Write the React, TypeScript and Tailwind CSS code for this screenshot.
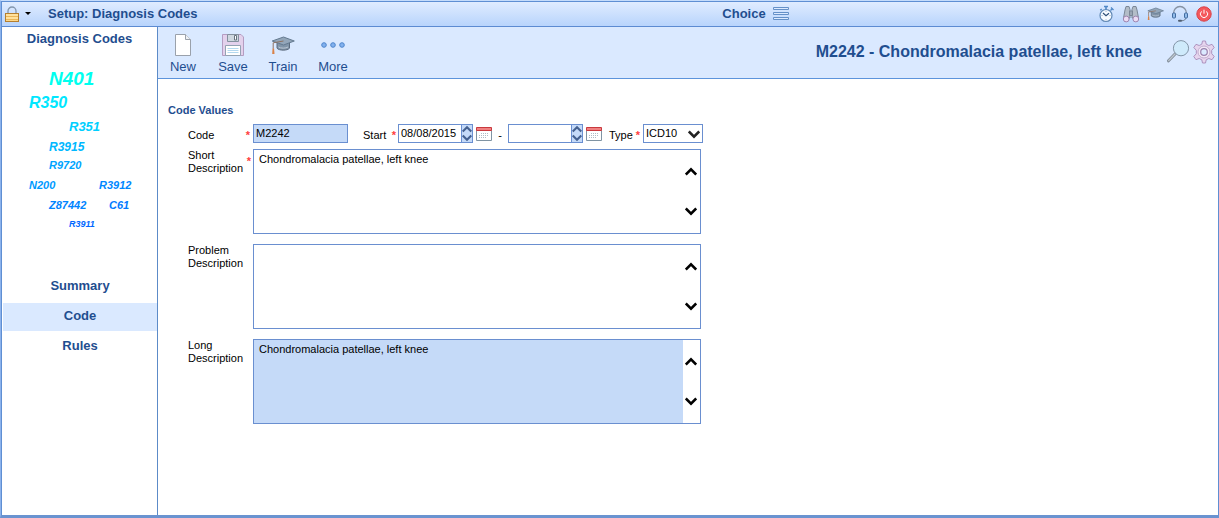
import { useState } from "react";
import type { ReactNode } from "react";

interface CloudCode {
  code: string;
  className: string;
}

interface CloudRow {
  className: string;
  codes: CloudCode[];
}

const CLOUD: CloudRow[] = [
  { className: "h-6 pl-[47px] text-[19px]", codes: [{ code: "N401", className: "text-[#00ffef]" }] },
  { className: "h-6 pl-[27px] text-base", codes: [{ code: "R350", className: "text-[#00e7ff]" }] },
  { className: "h-6 pl-[67px] text-[13px]", codes: [{ code: "R351", className: "text-[#00cfff]" }] },
  { className: "h-4 pl-[47px] text-xs", codes: [{ code: "R3915", className: "text-[#00b8ff]" }] },
  { className: "h-5 pl-[47px] text-[11px]", codes: [{ code: "R9720", className: "text-[#00a4ff]" }] },
  {
    className: "h-5 pl-[27px] text-[11px]",
    codes: [
      { code: "N200", className: "w-[70px] text-[#009aff]" },
      { code: "R3912", className: "text-[#0088ff]" },
    ],
  },
  {
    className: "h-5 pl-[47px] text-[11px]",
    codes: [
      { code: "Z87442", className: "w-[60px] text-[#0084ff]" },
      { code: "C61", className: "text-[#007aff]" },
    ],
  },
  { className: "h-5 pl-[67px] text-[9px]", codes: [{ code: "R3911", className: "text-[#0068ff]" }] },
];

const SECTIONS = ["Summary", "Code", "Rules"];

function LockIcon() {
  return (
    <svg width="16" height="16" viewBox="0 0 16 16" fill="none">
      <path d="M4 7V5a4 4 0 0 1 8 0v2" stroke="#8497ad" strokeWidth="1.3" />
      <rect x="1.5" y="7.5" width="13" height="8" fill="#ffd98a" stroke="#b57f2f" />
      <path d="M2 10.5h12M2 13.5h12" stroke="#eab659" />
      <path d="M2 9h12M2 12h12" stroke="#fff0c0" strokeWidth=".7" />
    </svg>
  );
}

function StopwatchIcon() {
  return (
    <svg width="16" height="18" viewBox="0 0 16 18" fill="none">
      <circle cx="7" cy="10.500" r="6" fill="#f7fbff" stroke="#6289b5" strokeWidth="1.200" />
      <path d="M5 1.500h4M7 1.500v3" stroke="#4f87c6" strokeWidth="1.600" />
      <path d="M11.500 5.500l2-2M12 2.500l2.500 2.500M1.200 5.200l1.500-1.200" stroke="#4f87c6" strokeWidth="1.300" />
      <path d="M4 8l3 2.700L10 8.200" stroke="#2e4f78" strokeWidth="1.200" />
      <path d="M7 5.800v1M7 14.300v1M2.500 10.500h1M10.500 10.500h1" stroke="#8fa7c2" />
    </svg>
  );
}

function BinocularsIcon() {
  return (
    <svg width="18" height="18" viewBox="0 0 18 18" fill="none">
      <path d="M4 1.500h3l1 3v8.500H1.500L3 5zM14 1.500h-3l-1 3v8.500h6.500L15 5z" fill="#b3bdc8" stroke="#7b8797" />
      <path d="M7.500 6h3v4.500h-3z" fill="#9aa6b5" stroke="#7b8797" />
      <circle cx="4.200" cy="14" r="2.900" fill="#eadcf3" stroke="#9d84b0" />
      <circle cx="13.800" cy="14" r="2.900" fill="#eadcf3" stroke="#9d84b0" />
    </svg>
  );
}

function CapIcon({ width, height }: { width: number; height: number }) {
  return (
    <svg width={width} height={height} viewBox="0 0 24 19" fill="none">
      <path d="M6 6v6.200c2 2.600 10.500 2.600 12.500 0V6z" fill="#8094a8" stroke="#5c6b7d" />
      <path d="M7.500 11c2 1.500 7.500 1.500 9.500 0" stroke="#bcc7d3" />
      <path d="M12.500 1l10.800 4-10.800 4L1.200 5z" fill="#93a6b9" stroke="#647a90" />
      <path d="M12.500 5L2.200 6.800v6" stroke="#8d7263" />
      <path d="M1.500 12.500h1.600l.4 5.500H1.200z" fill="#d98248" />
    </svg>
  );
}

function HeadsetIcon() {
  return (
    <svg width="18" height="18" viewBox="0 0 18 18" fill="none">
      <path d="M2.500 8.500a6.500 7 0 0 1 13 0" stroke="#8692a3" strokeWidth="1.300" />
      <path d="M15 12.500c0 2-2 3.300-4.500 3.300" stroke="#6e7b8c" />
      <rect x="1.500" y="8" width="3" height="5" rx="1" fill="#91bbea" stroke="#416b9f" />
      <rect x="13.500" y="8" width="3" height="5" rx="1" fill="#91bbea" stroke="#416b9f" />
      <rect x="7" y="14.800" width="4" height="2" rx="1" fill="#4f5e70" />
    </svg>
  );
}

function PowerIcon() {
  return (
    <svg width="16" height="16" viewBox="0 0 16 16" fill="none">
      <circle cx="8" cy="8" r="7.200" fill="#f4585c" stroke="#d94046" />
      <path d="M5.500 5.400a3.600 3.600 0 1 0 5 0M8 3.700v4" stroke="#fff" />
    </svg>
  );
}

function PageIcon() {
  return (
    <svg width="18" height="22" viewBox="0 0 18 22" fill="none">
      <path d="M1.500.5h10l5 5v16h-15z" fill="#fff" stroke="#9aa1ab" />
      <path d="M11.500.5v5h5" fill="#eef1f5" stroke="#9aa1ab" />
    </svg>
  );
}

function DiskIcon() {
  return (
    <svg width="22" height="22" viewBox="0 0 22 22" fill="none">
      <path d="M.5.5h18.500l2.500 2.500v18.500H.5z" fill="#e3d1ec" stroke="#b49dc2" />
      <path d="M5.500.5h11v7h-11z" fill="#cfd8e0" stroke="#84919f" />
      <path d="M12.500 1.500h2v4.500h-2z" fill="#fff" stroke="#66727f" />
      <path d="M3.500 11.500h15v10h-15z" fill="#fff" stroke="#93a3b3" />
      <path d="M5.500 14.500h11M5.500 16.500h11M5.500 18.500h11" stroke="#b3d8ef" />
    </svg>
  );
}

function DotsIcon() {
  return (
    <svg width="24" height="8" viewBox="0 0 24 8" fill="#82b1ee" stroke="#4d85cc">
      <circle cx="3" cy="4" r="2.300" />
      <circle cx="12" cy="4" r="2.300" />
      <circle cx="21" cy="4" r="2.300" />
    </svg>
  );
}

function MagnifierIcon() {
  return (
    <svg width="24" height="24" viewBox="0 0 24 24" fill="none">
      <path d="M9.500 13.500L2.500 20.800" stroke="#818c98" strokeWidth="3" strokeLinecap="round" />
      <path d="M9 14L2.700 20.500" stroke="#bec7cf" strokeWidth="1.300" strokeLinecap="round" />
      <circle cx="15" cy="8.200" r="7.600" fill="#cfeafb" stroke="#8496a8" />
    </svg>
  );
}

function GearIcon() {
  return (
    <svg width="24" height="24" viewBox="0 0 24 24" fill="none">
      <path
        d="M10.500 1h3l.7 3.200 2.600 1.300L20 4.300l2.200 3.200-2.500 2.800v3.400l2.500 2.800-2.200 3.200-3.200-1.200-2.600 1.300-.7 3.200h-3l-.7-3.200-2.600-1.300L4 19.700l-2.200-3.200 2.500-2.800v-3.400L1.800 7.500 4 4.300l3.200 1.200 2.600-1.300z"
        fill="#e6d5ee"
        stroke="#ad93bf"
        strokeLinejoin="round"
      />
      <circle cx="12" cy="12" r="6" fill="#f2e8f6" stroke="#c3aed0" />
      <circle cx="12" cy="12" r="3.300" fill="#dbeaff" stroke="#9a82ae" strokeWidth="1.200" />
    </svg>
  );
}

function CalendarIcon() {
  return (
    <svg width="16" height="14" viewBox="0 0 16 14" fill="none">
      <path d="M.5 3.500h15v10H.5z" fill="#fff" stroke="#8094a3" />
      <path d="M.5.5h15v3H.5z" fill="#f08080" stroke="#c8393e" />
      <path d="M5 6.500h7M3 8.500h9M3 10.500h7" stroke="#aebcc6" strokeDasharray="1 1" />
    </svg>
  );
}

function Chevron({ up, className }: { up?: boolean; className?: string }) {
  return (
    <svg className={className} width="12" height="9" viewBox="0 0 12 9" fill="none" stroke="currentColor" strokeWidth="2.600">
      <path d={up ? "M.8 7.500L6 2.300l5.200 5.200" : "M.8 1.500L6 6.700l5.200-5.200"} />
    </svg>
  );
}

function ToolButton({ label, children }: { label: string; children: ReactNode }) {
  return (
    <button className="w-[50px] flex flex-col items-center text-[13px] leading-4">
      <span className="h-6 flex items-center justify-center">{children}</span>
      <span className="pt-[2px]">{label}</span>
    </button>
  );
}

function Required() {
  return <span className="font-bold text-[#ff4040]" aria-hidden="true">*</span>;
}

function DateField({ id, label, value }: { id: string; label: string; value: string }) {
  const [date, setDate] = useState(value);

  return (
    <div className="flex items-center gap-[3px]">
      <div className="flex w-[75px] h-[19px] border border-[#6a8fd0]">
        <input
          id={id}
          aria-label={label}
          value={date}
          onChange={e => setDate(e.target.value)}
          className="flex-1 min-w-0 px-[2px] bg-white outline-none"
        />
        <div className="w-[11px] flex flex-col border-l border-[#6a8fd0] bg-[#c5daf8] text-[#44608f]">
          <button aria-label={`${label} up`} className="flex-1 flex items-center justify-center">
            <Chevron up className="w-[10px] h-2" />
          </button>
          <button aria-label={`${label} down`} className="flex-1 flex items-center justify-center">
            <Chevron className="w-[10px] h-2" />
          </button>
        </div>
      </div>
      <button aria-label={`Pick ${label.toLowerCase()}`}>
        <CalendarIcon />
      </button>
    </div>
  );
}

interface DescriptionProps {
  id: string;
  label: string;
  value?: string;
  required?: boolean;
  readOnly?: boolean;
}

function DescriptionField({ id, label, value = "", required, readOnly }: DescriptionProps) {
  const [text, setText] = useState(value);

  return (
    <div className="flex">
      <div className="w-[65px] shrink-0 flex justify-between pr-[2px]">
        <label htmlFor={id} className="w-[56px] leading-[13px]">{label} Description</label>
        {required && <span className="pt-1"><Required /></span>}
      </div>
      <div className="w-[448px] h-[85px] flex border border-[#6a8fd0]">
        <textarea
          id={id}
          value={text}
          readOnly={readOnly}
          onChange={e => setText(e.target.value)}
          className={`flex-1 min-w-0 resize-none overflow-hidden outline-none px-[5px] pt-[3px] leading-[13px] ${readOnly ? "bg-[#c5daf8]" : "bg-white"}`}
        />
        <div className="w-[17px] flex flex-col items-center gap-6 pt-[13px] pr-px">
          <button aria-label="Scroll up" className="h-4 flex items-center">
            <Chevron up />
          </button>
          <button aria-label="Scroll down" className="h-4 flex items-center">
            <Chevron />
          </button>
        </div>
      </div>
    </div>
  );
}

export default function App() {
  const [section, setSection] = useState("Code");

  return (
    <div className="min-h-screen flex flex-col border-t border-t-[#c5dcfb] border-l border-l-[#8db3ec] border-b-[3px] border-b-[#6a93d0] font-['Liberation_Sans',Arial,sans-serif] text-[11px] text-black bg-white">
      <div className="flex-1 flex flex-col border-x border-t border-[#5f8fd3]">
        {/* Title bar */}
        <header className="h-[25px] shrink-0 grid grid-cols-3 items-center pb-px border-b border-[#5c8bd2] bg-linear-to-b from-[#e0ecff] to-[#b8d4fc] text-[13px] font-bold text-[#1f4e8f]">
          <div className="flex items-center pl-[2px]">
            <button aria-label="Lock menu" className="flex items-center gap-[5px]">
              <LockIcon />
              <svg width="6" height="3" viewBox="0 0 6 3"><path d="M0 0h6L3 3z" /></svg>
            </button>
            <span className="pl-[17px]">Setup: Diagnosis Codes</span>
          </div>
          <div className="flex items-center justify-end gap-[7px] pr-6">
            <span>Choice</span>
            <button aria-label="Choice list">
              <svg width="16" height="13" viewBox="0 0 16 13" fill="#dceaff" stroke="#6591c8">
                <path d="M.5.5h15v2H.5zM.5 5.500h15v2H.5zM.5 10.500h15v2H.5z" />
              </svg>
            </button>
          </div>
          <div className="flex items-center justify-end gap-[7px] pr-[6px]">
            <button aria-label="Timer"><StopwatchIcon /></button>
            <button aria-label="Find"><BinocularsIcon /></button>
            <button aria-label="Training"><CapIcon width={17} height={14} /></button>
            <button aria-label="Support"><HeadsetIcon /></button>
            <button aria-label="Log off"><PowerIcon /></button>
          </div>
        </header>

        <div className="flex-1 flex">
          {/* Sidebar */}
          <aside className="w-[156px] shrink-0 border-r border-[#5c8bc8]">
            <h2 className="h-10 pt-1 text-center text-[13px] leading-4 font-bold text-[#1f4e8f]">Diagnosis Codes</h2>
            <div className="font-bold italic">
              {CLOUD.map(row => (
                <div key={row.codes[0].code} className={`flex items-center ${row.className}`}>
                  {row.codes.map(c => (
                    <a key={c.code} href={`#${c.code}`} className={c.className}>{c.code}</a>
                  ))}
                </div>
              ))}
            </div>
            <nav className="pt-[38px] flex flex-col gap-[2px] text-[13px] font-bold text-[#1f4e8f]">
              {SECTIONS.map(s => (
                <button
                  key={s}
                  onClick={() => setSection(s)}
                  className={`h-7 ml-px pb-[3px] ${s === section ? "bg-[#dae9ff]" : ""}`}
                >
                  {s}
                </button>
              ))}
            </nav>
          </aside>

          <main className="flex-1 min-w-0">
            {/* Toolbar */}
            <div className="h-[52px] flex items-center justify-between border-b border-[#5c94dc] bg-[#dae9ff] text-[#1f4e8f]">
              <div className="flex pt-[3px]">
                <ToolButton label="New"><PageIcon /></ToolButton>
                <ToolButton label="Save"><DiskIcon /></ToolButton>
                <ToolButton label="Train"><CapIcon width={24} height={19} /></ToolButton>
                <ToolButton label="More"><DotsIcon /></ToolButton>
              </div>
              <div className="flex items-center pb-px pr-[2px]">
                <h1 className="pr-6 text-base font-bold">M2242 - Chondromalacia patellae, left knee</h1>
                <button aria-label="Search" className="pr-[2px]"><MagnifierIcon /></button>
                <button aria-label="Settings"><GearIcon /></button>
              </div>
            </div>

            <form className="pl-[10px] pt-[23px]" onSubmit={e => e.preventDefault()}>
              <h3 className="h-[22px] leading-4 font-bold text-[#1f4e8f]">Code Values</h3>
              <div className="pl-5">
                <div className="flex items-center h-[19px]">
                  <div className="w-[65px] flex justify-between pt-1 pr-[3px]">
                    <label htmlFor="code">Code</label>
                    <Required />
                  </div>
                  <input
                    id="code"
                    defaultValue="M2242"
                    readOnly
                    className="w-[95px] h-[19px] px-[2px] pb-[2px] border border-[#6a8fd0] bg-[#c5daf8] outline-none"
                  />
                  <div className="w-[50px] flex justify-between pt-1 pl-[15px] pr-[2px]">
                    <label htmlFor="start">Start</label>
                    <Required />
                  </div>
                  <DateField id="start" label="Start" value="08/08/2015" />
                  <span className="w-4 pt-1 text-center">-</span>
                  <DateField id="end" label="End" value="" />
                  <div className="w-[41px] flex justify-between pt-1 pl-[7px] pr-[3px]">
                    <label htmlFor="type">Type</label>
                    <Required />
                  </div>
                  <div className="relative">
                    <select
                      id="type"
                      defaultValue="ICD10"
                      className="block w-[60px] h-[19px] pl-[2px] appearance-none border border-[#6a8fd0] bg-white outline-none"
                    >
                      <option>ICD9</option>
                      <option>ICD10</option>
                    </select>
                    <Chevron className="absolute right-[3px] top-[6px] pointer-events-none text-[#222]" />
                  </div>
                </div>

                <div className="pt-[6px] flex flex-col gap-[10px]">
                  <DescriptionField id="short" label="Short" value="Chondromalacia patellae, left knee" required />
                  <DescriptionField id="problem" label="Problem" />
                  <DescriptionField id="long" label="Long" value="Chondromalacia patellae, left knee" readOnly />
                </div>
              </div>
            </form>
          </main>
        </div>
      </div>
    </div>
  );
}
